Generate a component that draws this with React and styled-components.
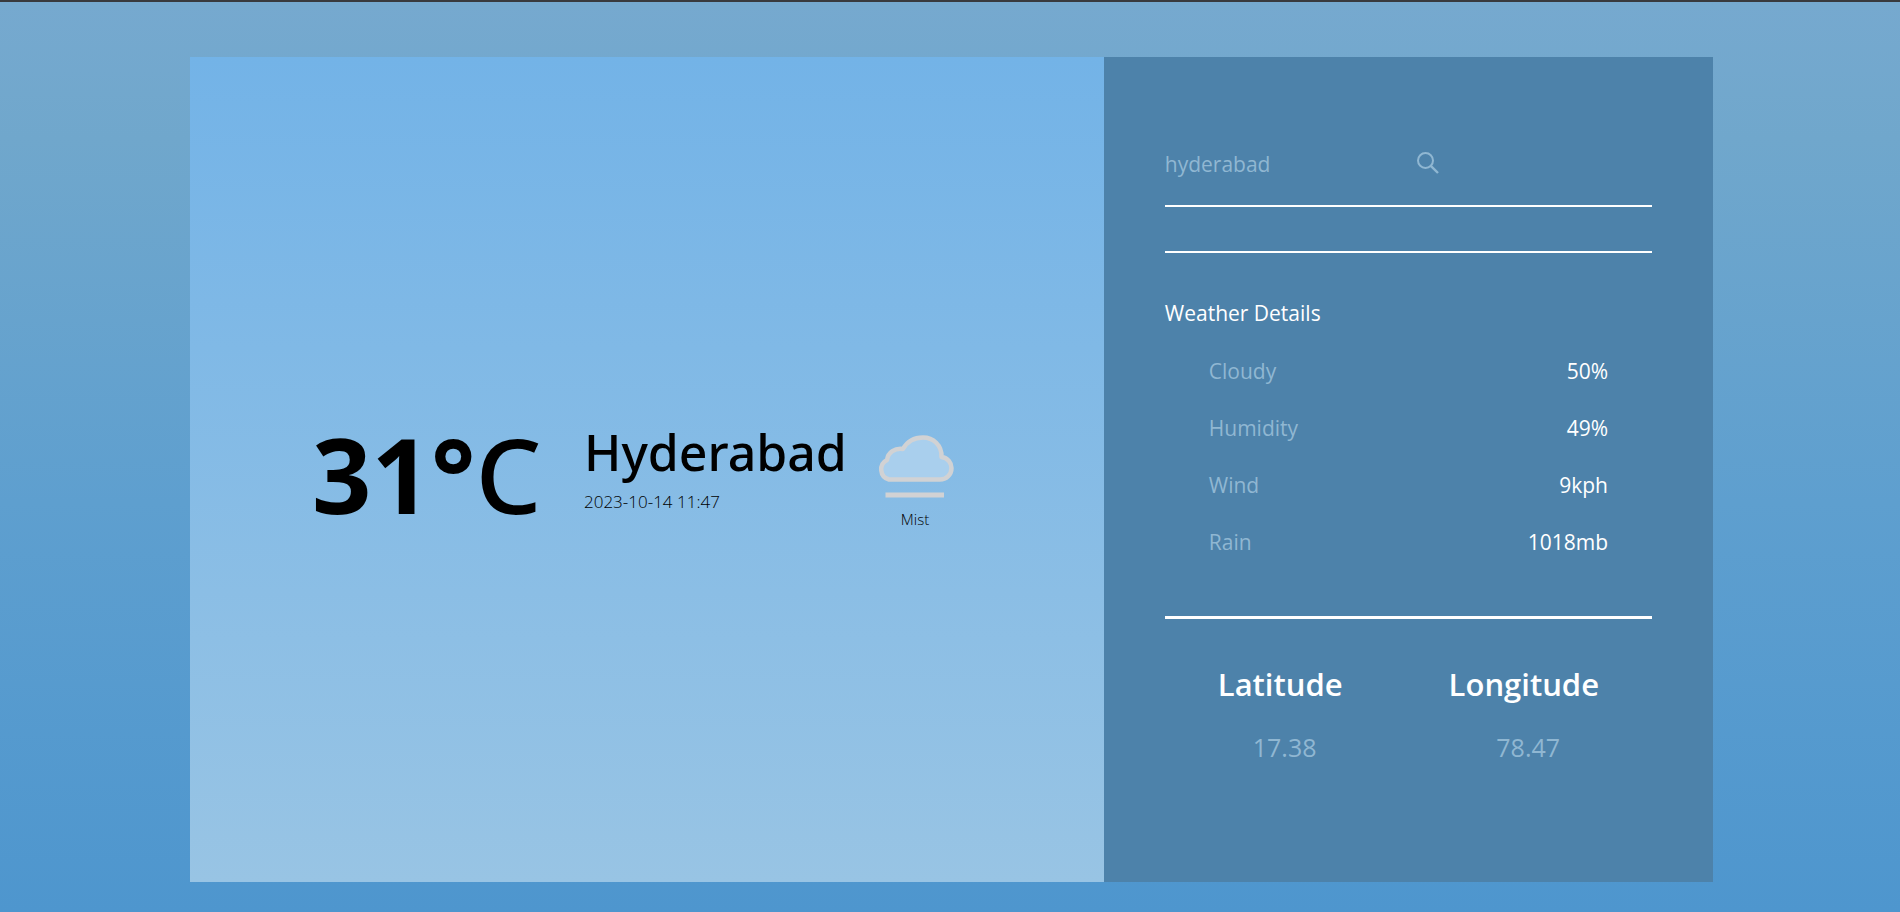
import React from "react";
import styled, { createGlobalStyle } from "styled-components";

const GlobalStyle = createGlobalStyle`
  * { box-sizing: border-box; margin: 0; padding: 0; }
  body { font-family: "Open Sans", "Noto Sans", sans-serif; color: #000; }
`;

const Page = styled.div`
  display: flex;
  min-height: 100vh;
  padding: 55px 187px 30px 190px;
  border-top: 2px solid #393a3e;
  background: linear-gradient(#76a9cf, #70a7cc 15%, #5e9fcf 55%, #4e96ce);
`;

const Card = styled.main`
  flex: 1;
  display: grid;
  grid-template-columns: minmax(0, 3fr) minmax(0, 2fr);
`;

const Current = styled.section`
  display: flex;
  align-items: center;
  padding: 8px 0 0 122px;
  background: linear-gradient(#73b3e7, #98c4e4);
`;

const Temperature = styled.p`
  width: 272px;
  font-size: 104px;
  font-weight: 700;
  line-height: 120px;
  white-space: nowrap;
`;

const Unit = styled.span`
  font-family: "Noto Sans", sans-serif;
  font-weight: 500;
`;

const Place = styled.div`
  width: 292px;
  padding-bottom: 8px;
  white-space: nowrap;
`;

const City = styled.h1`
  font-family: "Noto Sans", sans-serif;
  font-size: 50px;
  font-weight: 500;
  line-height: 64px;
`;

const LocalTime = styled.p`
  font-size: 17px;
  font-weight: 300;
  line-height: 36px;
`;

const Condition = styled.figure`
  display: flex;
  flex-direction: column;
  align-items: center;
  gap: 8px;
  padding-top: 18px;
`;

const ConditionName = styled.figcaption`
  font-size: 15px;
  font-weight: 300;
  line-height: 24px;
`;

const Side = styled.aside`
  padding: 86px 61px 0;
  background: #4d82aa;
  color: #fff;
  font-size: 21px;
`;

const Search = styled.form`
  display: flex;
  align-items: center;
  height: 40px;
  margin-bottom: 22px;
  color: #90b7d2;
`;

const SearchInput = styled.input`
  width: 252px;
  height: 40px;
  padding-top: 2px;
  border: 0;
  outline: 0;
  background: transparent;
  color: inherit;
  font: inherit;
`;

const SearchButton = styled.button`
  display: flex;
  border: 0;
  background: transparent;
  color: inherit;
  cursor: pointer;
`;

const Rule = styled.hr`
  height: ${(p) => (p.$thick ? 3 : 2)}px;
  border: 0;
  background: #fff;
  margin-bottom: 44px;
`;

const Heading = styled.h2`
  font-size: 21px;
  font-weight: 400;
  line-height: 32px;
  margin-bottom: 14px;
`;

const Details = styled.dl`
  padding: 0 44px;
  margin-bottom: 45px;
`;

const Detail = styled.div`
  display: flex;
  justify-content: space-between;
  line-height: 57px;
`;

const Label = styled.dt`
  color: #90b7d2;
`;

const CoordRow = styled.div`
  display: flex;
  justify-content: space-around;
  margin-bottom: 25px;
`;

const CoordName = styled.h2`
  font-size: 31px;
  font-weight: 600;
  line-height: 43px;
`;

const CoordValue = styled.p`
  padding-right: 4px;
  font-size: 25px;
  line-height: 32px;
  color: #90b7d2;
`;

const details = [
  ["Cloudy", "50%"],
  ["Humidity", "49%"],
  ["Wind", "9kph"],
  ["Rain", "1018mb"],
];

const MistIcon = () => (
  <svg width="78" height="64" viewBox="0 0 78 64" aria-hidden="true">
    <path
      d="M13 44.500A10.500 10.500 0 0 1 11 25C12 17 19 13 27 14C32 5 39 2.500 47 2.500C57 2.500 66 10 65.500 22C72 23 75.500 28 75.500 33C75.500 40 70 44.500 64 44.500Z"
      fill="#a9cfed"
      stroke="#d1d2d4"
      strokeWidth="4.500"
      strokeLinejoin="round"
    />
    <path d="M9.500 60H68" stroke="#d1d2d4" strokeWidth="5" />
  </svg>
);

const SearchIcon = () => (
  <svg width="22" height="22" viewBox="0 0 22 22" fill="none" stroke="currentColor" aria-hidden="true">
    <circle cx="8.500" cy="8.500" r="7.500" strokeWidth="2" />
    <path d="M13.800 13.800L21 21" strokeWidth="2.400" />
  </svg>
);

export default function App() {
  return (
    <Page>
      <GlobalStyle />
      <Card>
        <Current>
          <Temperature>31°<Unit>C</Unit></Temperature>
          <Place>
            <City>Hyderabad</City>
            <LocalTime>2023-10-14 11:47</LocalTime>
          </Place>
          <Condition>
            <MistIcon />
            <ConditionName>Mist</ConditionName>
          </Condition>
        </Current>
        <Side>
          <Search onSubmit={(e) => e.preventDefault()}>
            <SearchInput type="text" aria-label="City" defaultValue="hyderabad" />
            <SearchButton type="submit" aria-label="Search">
              <SearchIcon />
            </SearchButton>
          </Search>
          <Rule />
          <Rule />
          <Heading>Weather Details</Heading>
          <Details>
            {details.map(([name, value]) => (
              <Detail key={name}>
                <Label>{name}</Label>
                <dd>{value}</dd>
              </Detail>
            ))}
          </Details>
          <Rule $thick />
          <CoordRow>
            <CoordName>Latitude</CoordName>
            <CoordName>Longitude</CoordName>
          </CoordRow>
          <CoordRow>
            <CoordValue>17.38</CoordValue>
            <CoordValue>78.47</CoordValue>
          </CoordRow>
        </Side>
      </Card>
    </Page>
  );
}
